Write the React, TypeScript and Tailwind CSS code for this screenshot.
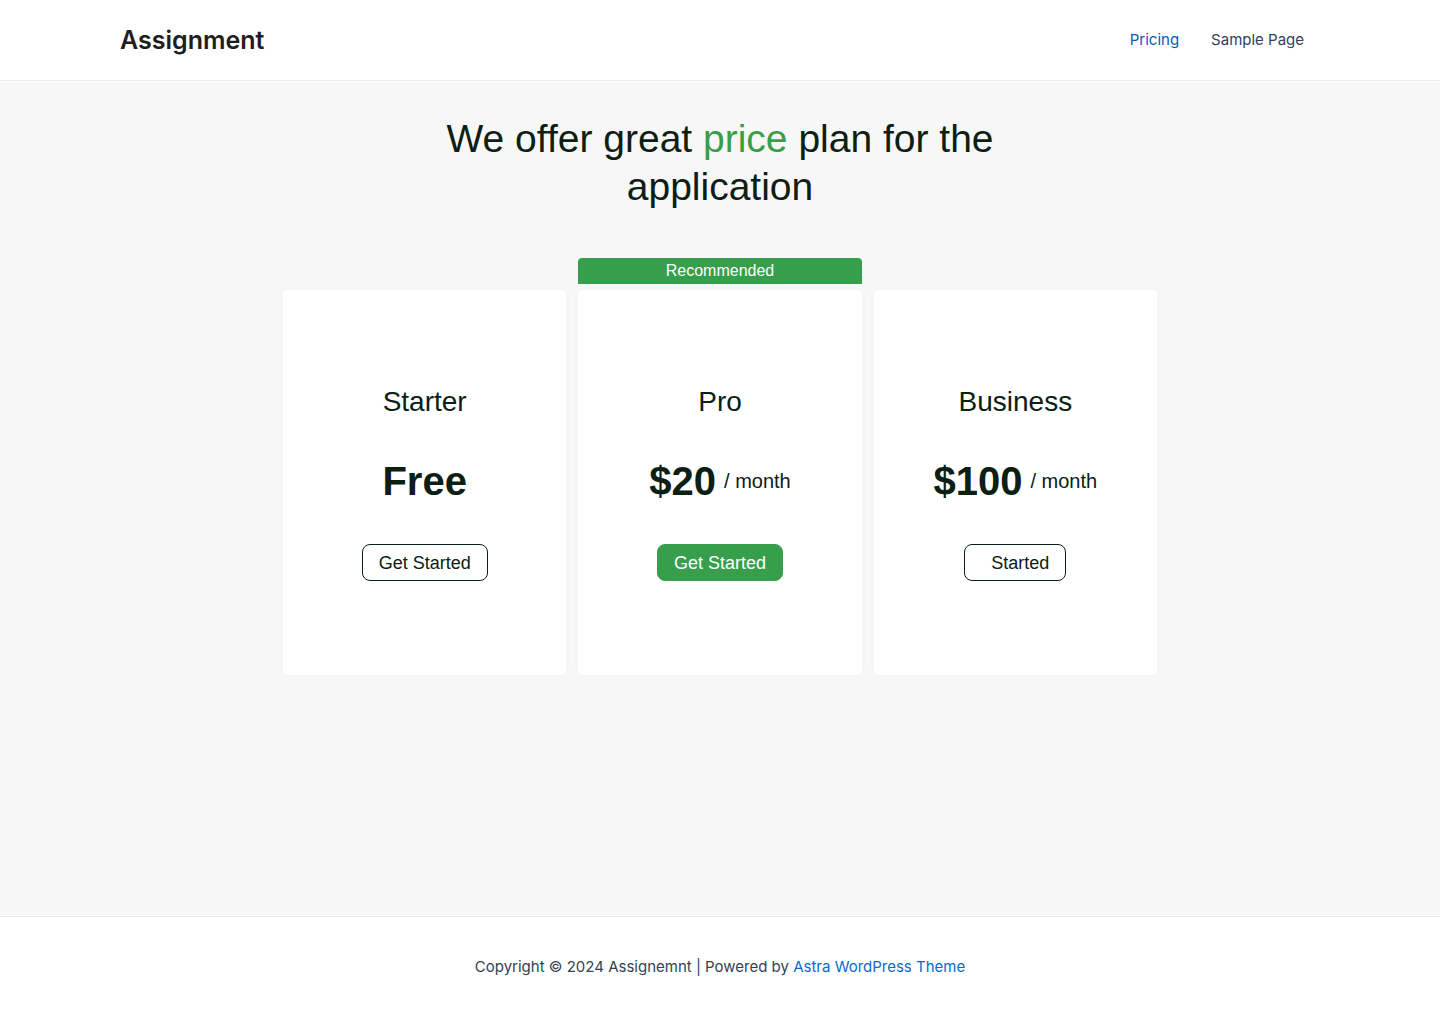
import React from "react";

const plans = [
  { name: "Starter", price: "Free", period: "", action: "Get Started", button: "border-[#0b2012] px-4", recommended: false },
  { name: "Pro", price: "$20", period: "/ month", action: "Get Started", button: "border-[#379e4b] bg-[#379e4b] px-4 text-white", recommended: true },
  { name: "Business", price: "$100", period: "/ month", action: "Started", button: "border-[#0b2012] pr-4 pl-[26px]", recommended: false },
];

export default function App() {
  return (
    <div className="flex min-h-screen flex-col bg-[#f7f7f7] font-['Liberation_Sans',Arial,sans-serif] text-[#0b2012]">
      <header className="border-b border-[#eaeaea] bg-white font-[Inter,sans-serif]">
        <div className="mx-auto flex h-20 max-w-[1200px] items-center justify-between">
          <a href="#" className="text-[25px] leading-9 font-semibold text-[#1e1e1e]">Assignment</a>
          <nav className="flex gap-8 pr-4 text-[15px] leading-[26px] text-[#334155]">
            <a href="#pricing" className="text-[#045cb4]">Pricing</a>
            <a href="#sample">Sample Page</a>
          </nav>
        </div>
      </header>
      <main className="grow border-y border-white px-4 pt-[33px]">
        <h1 className="mx-auto max-w-[600px] text-center text-[39px] leading-[48px]">
          We offer great <span className="text-[#379e4b]">price</span> plan for the application
        </h1>
        <div className="mx-auto mt-[47px] grid max-w-[874px] grid-cols-3 items-end gap-3">
          {plans.map((plan) => (
            <section key={plan.name}>
              {plan.recommended && (
                <div className="mb-1.5 rounded-t bg-[#379e4b] text-center text-base leading-[26px] text-white">Recommended</div>
              )}
              <div className="flex h-[385px] flex-col items-center justify-center rounded bg-white shadow-[0_0_10px_rgba(0,0,0,0.02)]">
                <h2 className="text-[28px] leading-9">{plan.name}</h2>
                <p className="mt-9 flex items-center gap-2 leading-[50px]">
                  <span className="text-[40px] font-bold">{plan.price}</span>
                  {plan.period && <span className="text-xl">{plan.period}</span>}
                </p>
                <button className={`mt-[38px] h-[37px] rounded-lg border text-lg ${plan.button}`}>
                  {plan.action}
                </button>
              </div>
            </section>
          ))}
        </div>
      </main>
      <footer className="border-t border-[#eaeaea] bg-white px-4 py-[37px] text-center font-[Inter,sans-serif] text-[15px] leading-[26px] text-[#334155]">
        Copyright © 2024 Assignemnt | Powered by <a href="#astra" className="text-[#046bd2]">Astra WordPress Theme</a>
      </footer>
    </div>
  );
}
